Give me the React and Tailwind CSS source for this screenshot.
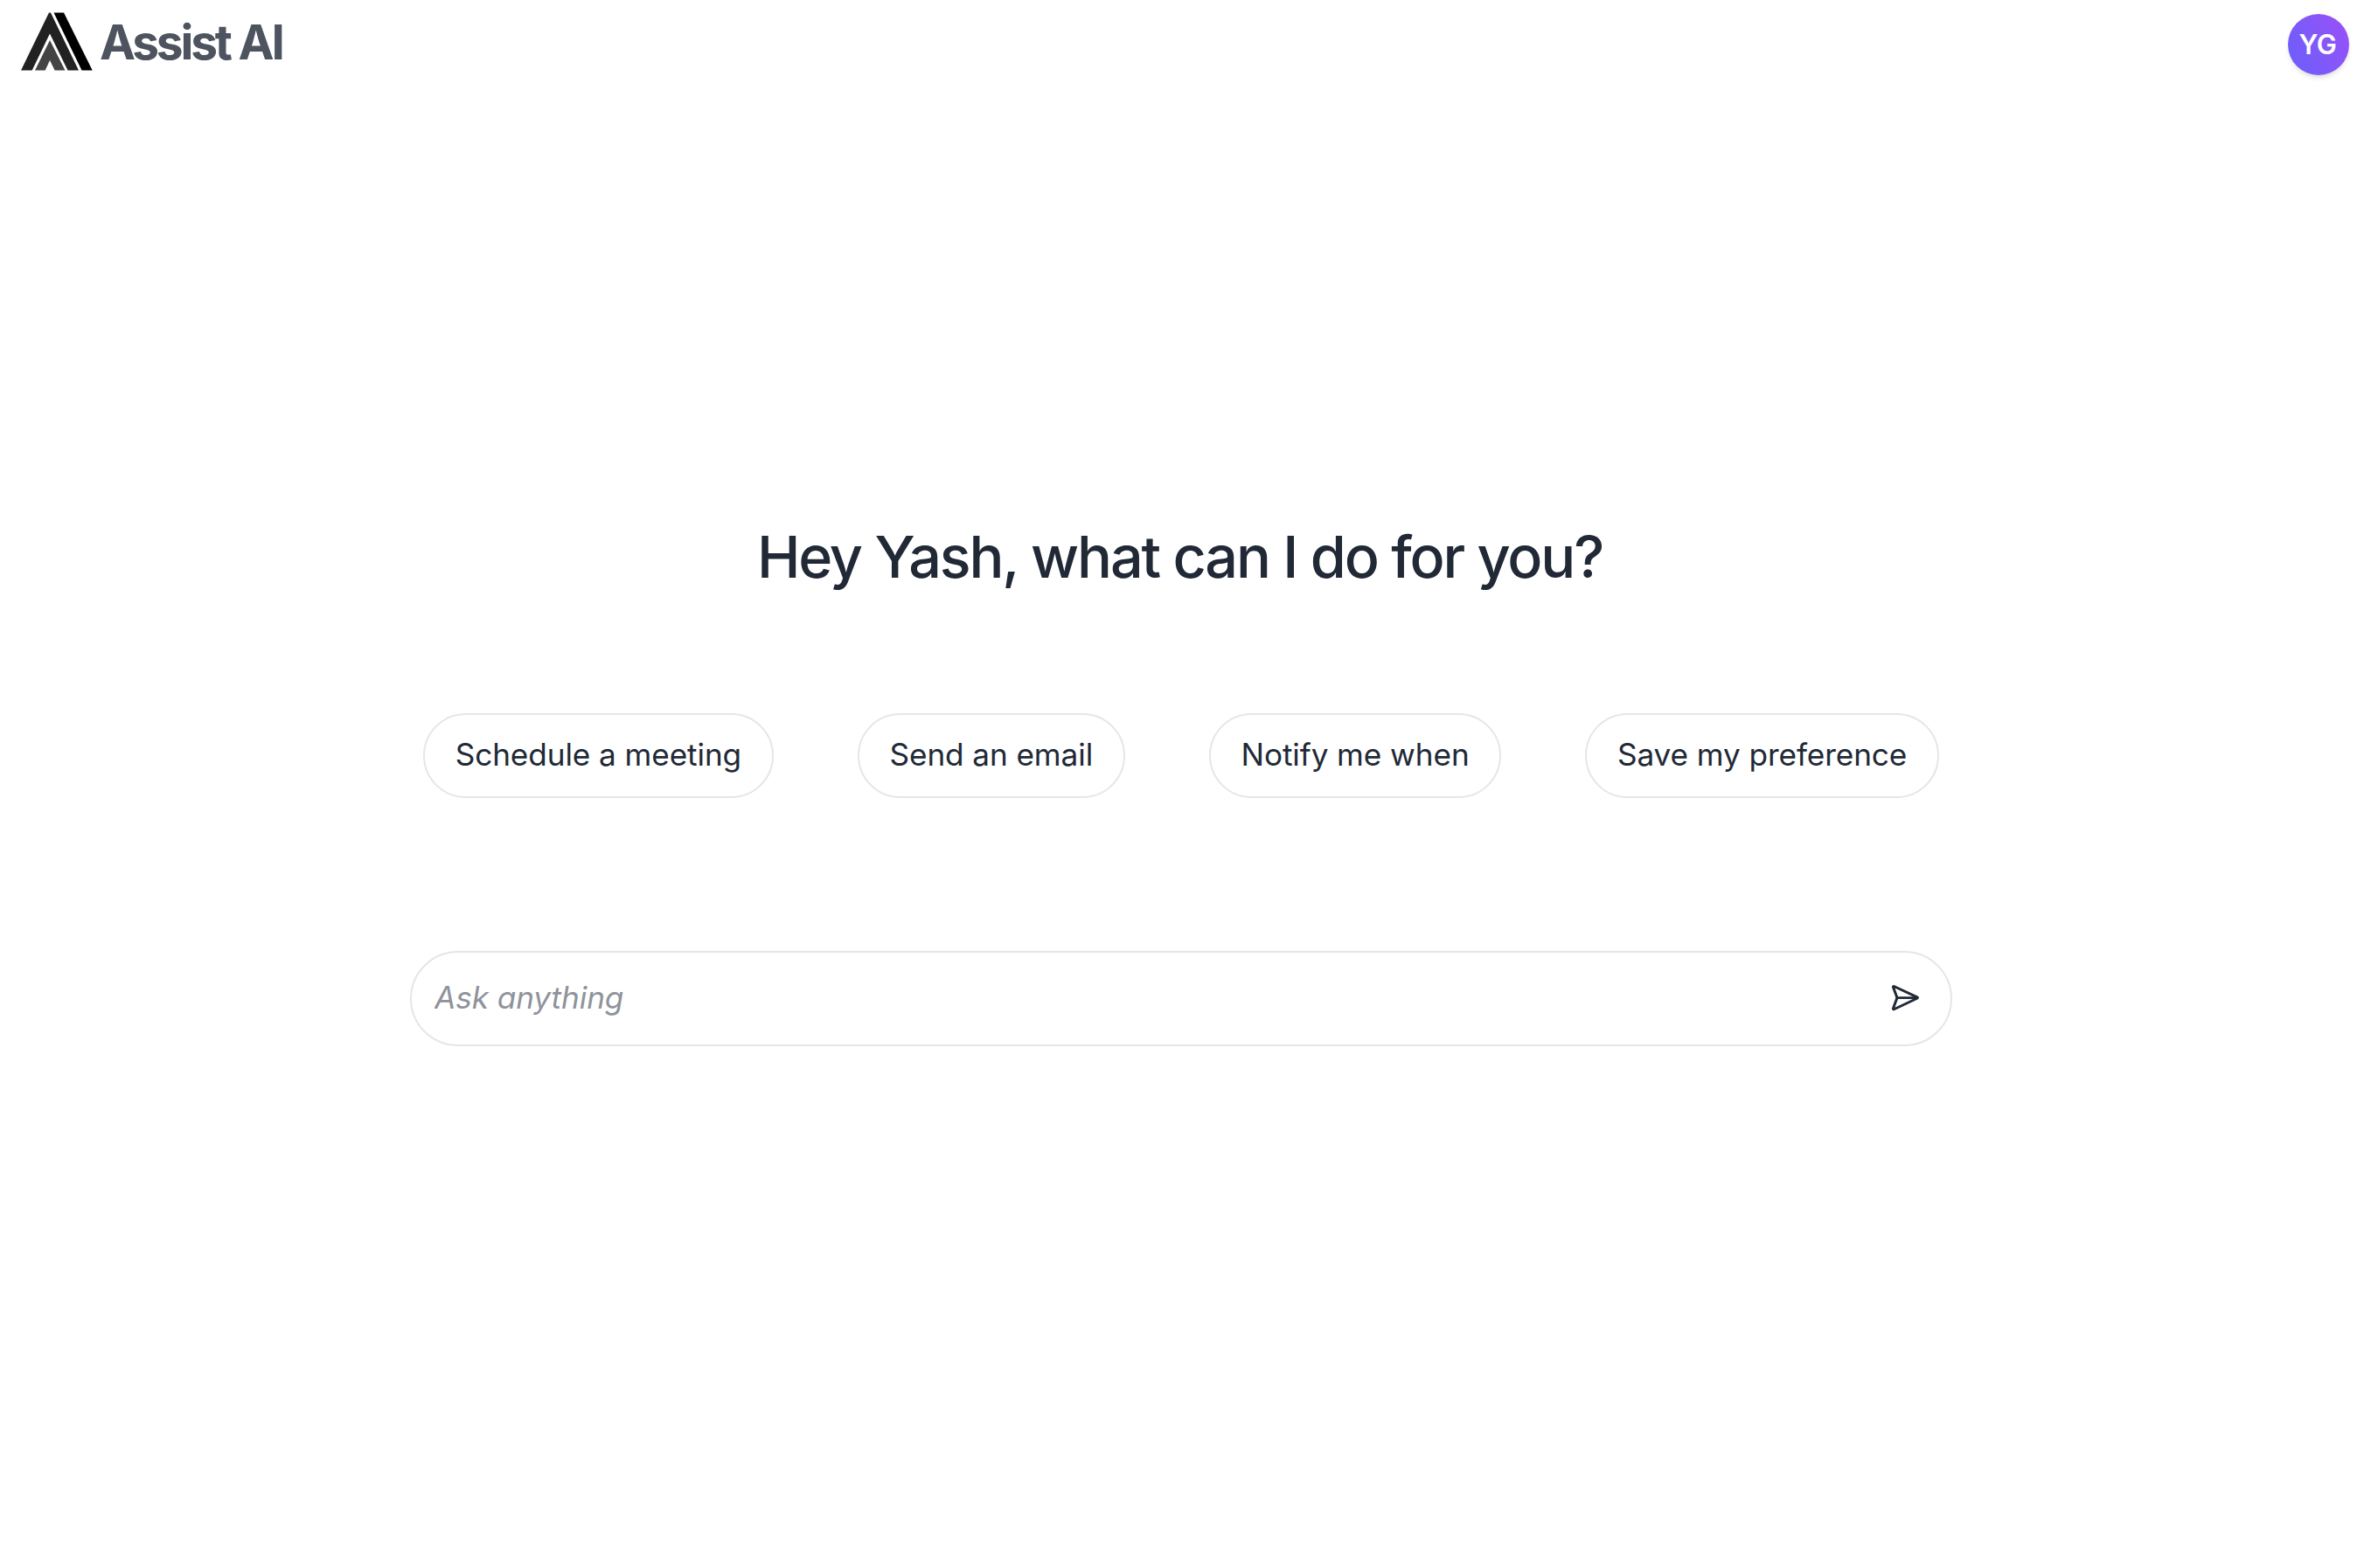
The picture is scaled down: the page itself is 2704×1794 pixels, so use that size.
import React from 'react';
import { SendHorizontal } from 'lucide-react';

const suggestions = [
  'Schedule a meeting',
  'Send an email',
  'Notify me when',
  'Save my preference',
];

const Logo = () => (
  <svg viewBox="0 0 82 67" className="w-[82px] h-[67px]">
    <path d="M32 0.5 H34 L66 66.5 H53.5 L33 24.5 L12.7 66.5 H0 Z" fill="#222222" />
    <path d="M37.5 0.5 H49 L81.7 66.5 H69.5 Z" fill="#000000" />
    <path d="M33 32 L50.5 66.5 H38.7 L33 55 L27.7 66.5 H16 Z" fill="#444444" />
  </svg>
);

const Header = () => (
  <header className="flex items-start justify-between pl-6 pr-[17px]">
    <div className="flex items-start gap-2">
      <div className="pt-[13.5px]">
        <Logo />
      </div>
      <span className="mt-[13px] text-[55px] leading-[70px] font-bold tracking-[-3.2px] text-[#4d545f]">Assist AI</span>
    </div>
    <div className="mt-4 flex h-[70px] w-[70px] items-center justify-center rounded-full bg-linear-60 from-[#675ffb] to-[#9a4ff8] pr-[2px] text-[30.8px] font-semibold tracking-[-0.5px] text-white shadow-md">
      YG
    </div>
  </header>
);

const App = () => {
  return (
    <div className="flex h-[1794px] w-[2704px] flex-col bg-white font-['Inter',sans-serif] text-[#212936]">
      <Header />
      <main className="flex flex-col items-center pt-[511px] pr-[2px]">
        <h1 className="pr-[3px] text-[66.5px] leading-[80px] font-medium tracking-[-2.18px]">Hey Yash, what can I do for you?</h1>
        <div className="mt-[139px] flex w-[1734px] justify-between">
          {suggestions.map((label) => (
            <button
              key={label}
              className="h-[97px] rounded-full border-2 border-[#e5e5eb] px-[34.7px] pb-[2px] text-[35.2px] tracking-[-0.1px] whitespace-nowrap"
            >
              {label}
            </button>
          ))}
        </div>
        <div className="mt-[175px] flex h-[109px] w-[1764px] items-center justify-between rounded-full border-2 border-[#e5e5eb] pr-[35px] pl-[26px]">
          <input
            type="text"
            placeholder="Ask anything"
            className="flex-1 bg-transparent pb-[2px] text-[35.2px] tracking-[-0.1px] italic outline-none placeholder:text-[#8f939b]"
          />
          <SendHorizontal className="mb-[1px] h-[35.2px] w-[35.2px]" />
        </div>
      </main>
    </div>
  );
};

export default App;
